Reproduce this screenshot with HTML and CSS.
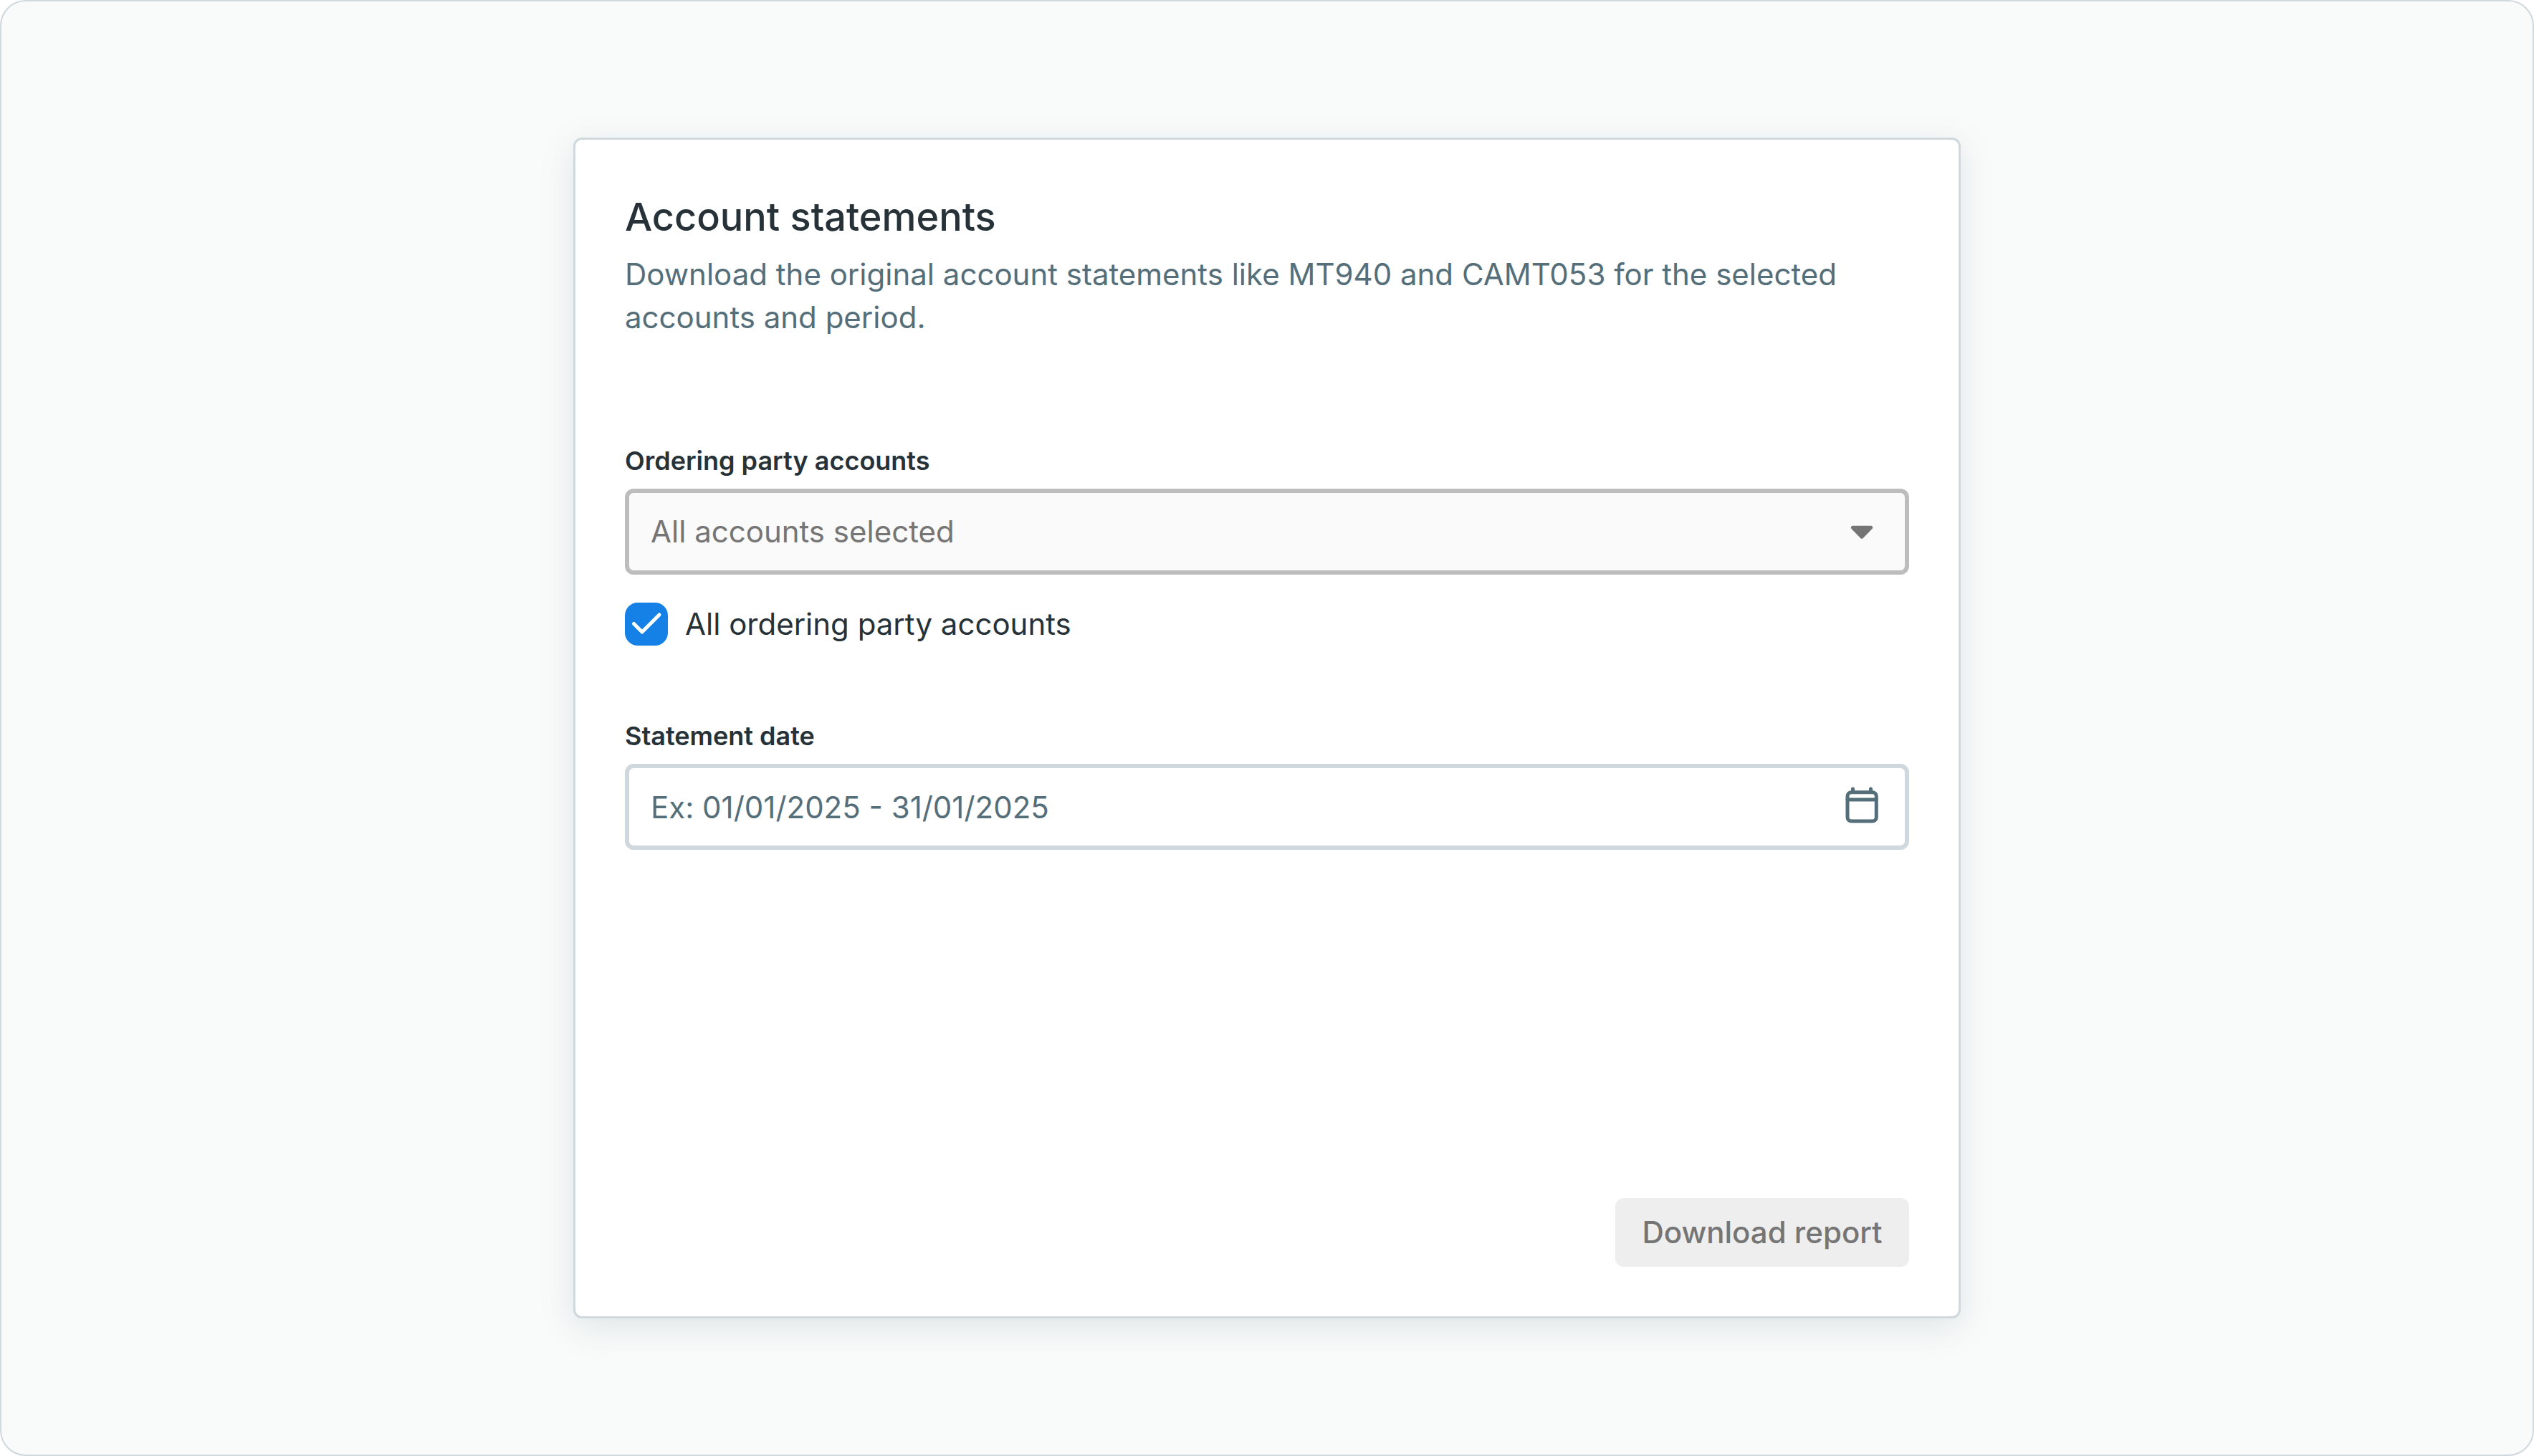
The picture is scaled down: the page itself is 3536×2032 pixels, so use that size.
FILE: index.html
```html
<!DOCTYPE html>
<html lang="en">
<head>
<meta charset="utf-8">
<title>Account statements</title>
<link rel="stylesheet" href="styles.css">
</head>
<body>
<main class="page">
  <form class="card">
    <header class="intro">
      <h1 class="title">Account statements</h1>
      <p class="description">Download the original account statements like MT940 and CAMT053 for the selected accounts and period.</p>
    </header>

    <div class="field">
      <label class="label" for="accounts">Ordering party accounts</label>
      <div class="control">
        <select class="input" id="accounts" disabled>
          <option>All accounts selected</option>
        </select>
        <svg class="icon icon-muted" viewBox="0 0 60 60" aria-hidden="true"><path d="M17.3 24.2h25.4L30 37.2z" fill="currentColor" stroke="currentColor" stroke-width="5" stroke-linejoin="round"/></svg>
      </div>
    </div>

    <div class="check">
      <span class="box">
        <input class="checkbox" type="checkbox" id="all-accounts" checked>
        <svg class="tick" viewBox="0 0 60 60" aria-hidden="true"><path d="M12.5 29.5 24 41 48 17" fill="none" stroke="currentColor" stroke-width="5" stroke-linecap="round" stroke-linejoin="round"/></svg>
      </span>
      <label for="all-accounts">All ordering party accounts</label>
    </div>

    <div class="field">
      <label class="label" for="date">Statement date</label>
      <div class="control">
        <input class="input" type="text" id="date" placeholder="Ex: 01/01/2025 - 31/01/2025">
        <svg class="icon" viewBox="0 0 60 60" aria-hidden="true"><g fill="none" stroke="currentColor" stroke-width="5" stroke-linecap="round"><rect x="10" y="9.7" width="40.3" height="40.3" rx="5.5"/><path d="M10 20h40.3M17.5 9V5M42.5 9V5"/></g></svg>
      </div>
    </div>

    <footer class="actions">
      <button class="button" type="submit" disabled>Download report</button>
    </footer>
  </form>
</main>
</body>
</html>
```
FILE: styles.css
```css
*,
*::before,
*::after {
  box-sizing: border-box;
}

body {
  margin: 0;
  background: #ffffff;
  color: #263238;
  font-family: Inter, "Liberation Sans", sans-serif;
  font-size: 42px;
  line-height: 60px;
}

.page {
  display: flex;
  align-items: center;
  justify-content: center;
  min-height: 100vh;
  padding: 48px;
  background: #f9fbfa;
  border: 2px solid #cfd8dc;
  border-radius: 36px;
}

.card {
  display: flex;
  flex-direction: column;
  width: 100%;
  max-width: 1936px;
  min-height: 1648px;
  padding: 69px;
  background: #ffffff;
  border: 3px solid #cfd8dc;
  border-radius: 12px;
  box-shadow: 0 12px 48px rgba(84, 110, 122, 0.16);
}

.intro {
  display: flex;
  flex-direction: column;
  gap: 11px;
  margin-bottom: 143px;
}

.title {
  margin: 0;
  font-size: 54px;
  font-weight: 500;
  line-height: 78px;
}

.description {
  margin: 0;
  color: #546e7a;
}

.field {
  display: flex;
  flex-direction: column;
  gap: 12px;
}

.label {
  font-size: 36px;
  font-weight: 600;
  line-height: 54px;
}

.control {
  display: grid;
  align-items: center;
}

.input {
  grid-area: 1 / 1;
  width: 100%;
  height: 120px;
  margin: 0;
  padding: 0 120px 0 30px;
  appearance: none;
  background: #ffffff;
  border: 6px solid #cfd8dc;
  border-radius: 12px;
  color: #263238;
  font: inherit;
}

.input::placeholder {
  color: #546e7a;
  opacity: 1;
}

.input:disabled {
  background: #fafafa;
  border-color: #bdbdbd;
  color: #757575;
  opacity: 1;
}

.icon {
  grid-area: 1 / 1;
  justify-self: end;
  width: 60px;
  height: 60px;
  margin-right: 36px;
  color: #546e7a;
  pointer-events: none;
}

.icon-muted {
  color: #757575;
}

.check {
  display: flex;
  align-items: center;
  gap: 24px;
  margin: 39px 0 99px;
}

.box {
  display: grid;
}

.checkbox {
  grid-area: 1 / 1;
  width: 60px;
  height: 60px;
  margin: 0;
  appearance: none;
  background: #ffffff;
  border: 6px solid #cfd8dc;
  border-radius: 18px;
}

.checkbox:checked {
  background: #1581e6;
  border: 0;
}

.tick {
  grid-area: 1 / 1;
  width: 60px;
  height: 60px;
  color: #ffffff;
  pointer-events: none;
}

.actions {
  display: flex;
  justify-content: flex-end;
  margin-top: auto;
}

.button {
  min-width: 410px;
  padding: 18px 36px;
  background: #eeeeee;
  border: 0;
  border-radius: 12px;
  color: #757575;
  font: inherit;
  font-weight: 500;
}
```
